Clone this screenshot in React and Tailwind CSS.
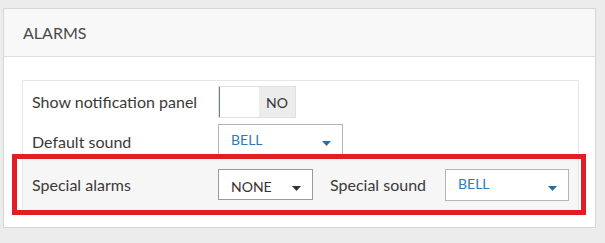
import React from "react";

function Caret({ color }) {
  return (
    <svg width="9" height="5" viewBox="0 0 9 5" className="block">
      <path d="M0 0 L9 0 L4.5 5 Z" fill={color} />
    </svg>
  );
}

function Select({ value, width, height, blue, top }) {
  return (
    <div
      className={`relative bg-white border ${blue ? "border-[#b5b5b5]" : "border-[#9a9a9a]"}`}
      style={{ width, height }}
    >
      <span
        className={`absolute left-[12px] text-[14px] leading-none ${blue ? "text-[#2b7bb5]" : "text-[#333]"}`}
        style={{ top }}
      >
        {value}
      </span>
      <span className="absolute right-[11px] top-1/2 mt-[1px]">
        <Caret color={blue ? "#2a6e9e" : "#333"} />
      </span>
    </div>
  );
}

export default function App() {
  return (
    <div
      className="w-[605px] h-[243px] bg-[#ececec] pt-[8px] pl-[3px]"
      style={{ fontFamily: "Lato, 'Open Sans', sans-serif" }}
    >
      <div className="relative w-[593px] h-[220px] bg-white border border-[#d6d6d6]">
        <div className="h-[48px] bg-[#f8f8f8] border-b border-[#dedede] flex items-center pl-[19px]">
          <span className="text-[16px] text-[#4a4a4a]">ALARMS</span>
        </div>
        <div className="pt-[23px] pl-[18px]">
          <div className="w-[557px] h-[132px] border border-[#e6e6e6] bg-white">
            <div className="flex items-center h-[42px] pl-[9px]">
              <span className="w-[186px] text-[16px] text-[#3a3a3a]">Show notification panel</span>
              <div className="flex h-[32px] border border-[#e0e0e0]">
                <div className="w-[40px] bg-white border-l border-l-[#6e7f90]"></div>
                <div className="w-[36px] bg-[#ececec] flex items-center justify-center text-[14px] text-[#333]">
                  NO
                </div>
              </div>
            </div>
            <div className="flex items-center h-[34px] pl-[9px]">
              <span className="w-[186px] text-[16px] text-[#3a3a3a] mt-[4px]">Default sound</span>
              <Select value="BELL" width={125} height={33} blue top={8} />
            </div>
            <div className="flex items-center h-[53px] mt-[1px] bg-[#f6f6f6] pl-[9px]">
              <span className="w-[186px] text-[16px] text-[#3a3a3a]">Special alarms</span>
              <Select value="NONE" width={95} height={31} top={10} />
              <span className="ml-[17px] w-[115px] text-[16px] text-[#3a3a3a]">Special sound</span>
              <Select value="BELL" width={124} height={32} blue top={7} />
            </div>
          </div>
        </div>
        <div className="absolute left-[8px] top-[145px] w-[574px] h-[61px] border-[5px] border-[#e11d25] pointer-events-none"></div>
      </div>
    </div>
  );
}
